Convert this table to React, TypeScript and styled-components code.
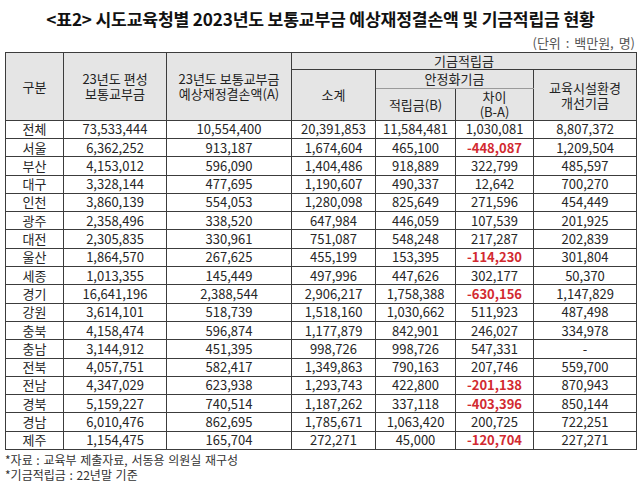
import React from "react";
import styled, { createGlobalStyle } from "styled-components";

const GlobalStyle = createGlobalStyle`
	html, body {
		margin: 0;
		padding: 0;
		background: #ffffff;
	}
	body {
		font-family: "Noto Sans CJK KR", "Noto Sans", sans-serif;
		color: #222222;
	}
`;

const Page = styled.div`
	display: flex;
	flex-direction: column;
	width: 640px;
	height: 482px;
	overflow: hidden;
	box-sizing: border-box;
	padding: 0 4px 0 5px;
`;

const Title = styled.h1`
	margin: 0;
	height: 36px;
	line-height: 38px;
	font-size: 17.2px;
	font-weight: 700;
	text-align: center;
	color: #111111;
	letter-spacing: -0.2px;
	white-space: nowrap;
`;

const Unit = styled.div`
	height: 16px;
	line-height: 14px;
	font-size: 13px;
	color: #555555;
	text-align: right;
	padding-right: 1px;
	word-spacing: 2px;
`;

const Table = styled.table`
	border-collapse: collapse;
	table-layout: fixed;
	width: 631px;
	font-size: 13px;
	border-right: 1px solid #9a9a9a;
`;

const HeadRow = styled.tr<{ $h: number }>`
	height: ${ p => p.$h }px;
`;

const Th = styled.th<{ $light?: boolean; $bottomLight?: boolean }>`
	background: #e5e5e5;
	border: 1px solid #3c3c3c;
	${ p => p.$light && "border-left-color: #9a9a9a;" }
	${ p => p.$bottomLight && "border-bottom-color: #9a9a9a;" }
	padding: 0;
	font-weight: 400;
	line-height: 15px;
	color: #222222;
	text-align: center;
	vertical-align: middle;
	white-space: nowrap;
`;

const BodyRow = styled.tr`
	height: 18.3px;
`;

const Td = styled.td<{ $red?: boolean; $light?: boolean }>`
	border: 1px solid #3c3c3c;
	${ p => p.$light && "border-left-color: #9a9a9a;" }
	padding: 0;
	line-height: 16px;
	text-align: center;
	vertical-align: middle;
	white-space: nowrap;
	color: ${ p => p.$red ? "#d22a30" : "#262626" };
	font-weight: ${ p => p.$red ? 600 : 400 };
`;

const Notes = styled.div`
	display: flex;
	flex-direction: column;
	padding-top: 2px;
	font-size: 12px;
	line-height: 15px;
	color: #333333;
	word-spacing: 1px;
`;

const rows: string[][] = [
	["전체", "73,533,444", "10,554,400", "20,391,853", "11,584,481", "1,030,081", "8,807,372"],
	["서울", "6,362,252", "913,187", "1,674,604", "465,100", "-448,087", "1,209,504"],
	["부산", "4,153,012", "596,090", "1,404,486", "918,889", "322,799", "485,597"],
	["대구", "3,328,144", "477,695", "1,190,607", "490,337", "12,642", "700,270"],
	["인천", "3,860,139", "554,053", "1,280,098", "825,649", "271,596", "454,449"],
	["광주", "2,358,496", "338,520", "647,984", "446,059", "107,539", "201,925"],
	["대전", "2,305,835", "330,961", "751,087", "548,248", "217,287", "202,839"],
	["울산", "1,864,570", "267,625", "455,199", "153,395", "-114,230", "301,804"],
	["세종", "1,013,355", "145,449", "497,996", "447,626", "302,177", "50,370"],
	["경기", "16,641,196", "2,388,544", "2,906,217", "1,758,388", "-630,156", "1,147,829"],
	["강원", "3,614,101", "518,739", "1,518,160", "1,030,662", "511,923", "487,498"],
	["충북", "4,158,474", "596,874", "1,177,879", "842,901", "246,027", "334,978"],
	["충남", "3,144,912", "451,395", "998,726", "998,726", "547,331", "-"],
	["전북", "4,057,751", "582,417", "1,349,863", "790,163", "207,746", "559,700"],
	["전남", "4,347,029", "623,938", "1,293,743", "422,800", "-201,138", "870,943"],
	["경북", "5,159,227", "740,514", "1,187,262", "337,118", "-403,396", "850,144"],
	["경남", "6,010,476", "862,695", "1,785,671", "1,063,420", "200,725", "722,251"],
	["제주", "1,154,475", "165,704", "272,271", "45,000", "-120,704", "227,271"],
];

const widths = [58, 103, 125, 84, 80, 78, 103];

const App = () => {
	return(
		<Page>
			<GlobalStyle />
			<Title>{ "<표2> 시도교육청별 2023년도 보통교부금 예상재정결손액 및 기금적립금 현황" }</Title>
			<Unit>{ "(단위 : 백만원, 명)" }</Unit>
			<Table>
				<colgroup>
					{ widths.map((w, i) => <col key={ i } style={ { width: w } } />) }
				</colgroup>
				<thead>
					<HeadRow $h={ 17 }>
						<Th rowSpan={ 3 }>{ "구분" }</Th>
						<Th rowSpan={ 3 }>{ "23년도 편성" }<br />{ "보통교부금" }</Th>
						<Th rowSpan={ 3 }>{ "23년도 보통교부금" }<br />{ "예상재정결손액(A)" }</Th>
						<Th colSpan={ 4 }>{ "기금적립금" }</Th>
					</HeadRow>
					<HeadRow $h={ 19 }>
						<Th rowSpan={ 2 }>{ "소계" }</Th>
						<Th colSpan={ 2 } $bottomLight>{ "안정화기금" }</Th>
						<Th rowSpan={ 2 }>{ "교육시설환경" }<br />{ "개선기금" }</Th>
					</HeadRow>
					<HeadRow $h={ 32 }>
						<Th>{ "적립금(B)" }</Th>
						<Th $light>{ "차이" }<br />{ "(B-A)" }</Th>
					</HeadRow>
				</thead>
				<tbody>
					{ rows.map(r => (
						<BodyRow key={ r[0] }>
							{ r.map((c, i) => (
								<Td
									key={ i }
									$light={ i === 5 }
									$red={ i === 5 && c.startsWith("-") }
								>
									{ c }
								</Td>
							)) }
						</BodyRow>
					)) }
				</tbody>
			</Table>
			<Notes>
				<span>{ "*자료 : 교육부 제출자료, 서동용 의원실 재구성" }</span>
				<span>{ "*기금적립금 : 22년말 기준" }</span>
			</Notes>
		</Page>
	);
};

export default App;
